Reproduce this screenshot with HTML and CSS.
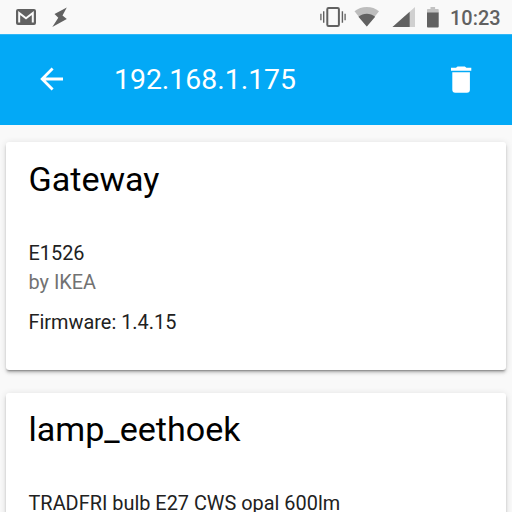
FILE: index.html
```html
<!DOCTYPE html>
<html lang="en">
<head>
<meta charset="utf-8">
<title>192.168.1.175</title>
<link rel="stylesheet" href="styles.css">
</head>
<body>
<div class="status">
  <svg class="mail" width="20" height="16" viewBox="0 0 20 16"><rect width="20" height="16" rx="2" fill="#616161"/><path d="M3.2 13.6V4L10 9.3 16.8 4v9.6" fill="none" stroke="#fafafa" stroke-width="2"/></svg>
  <svg class="bolt" width="16" height="21" viewBox="0 0 16 21"><path d="M14.8.5L2.5 7.1l3.8 3.6L.3 20 14.8 12 10.5 8.4Z" fill="#616161"/></svg>
  <svg class="vibrate" width="26" height="22" viewBox="0 0 26 22"><g fill="none" stroke="#616161"><rect x="7.3" y="2" width="11.6" height="18" rx="1.3" stroke-width="2"/><path d="M3.7 5.2v11.6M22.4 5.2v11.6" stroke-width="1.4"/><path d="M.9 7.7v6.6M25.1 7.7v6.6" stroke-width="1.3"/></g></svg>
  <svg class="wifi" width="26" height="20" viewBox="0 0 26 20"><path d="M.5 4.200C4 1.600 8 0 12.800 0s8.800 1.600 12.200 4.200L12.800 19.500Z" fill="#bdbdbd"/><path d="M4.400 9.700c5-4 11.800-4 16.800 0l-8.400 9.800Z" fill="#616161"/></svg>
  <svg class="signal" width="24" height="20" viewBox="0 0 24 20"><path d="M23 0v20H.5Z" fill="#d0d0d0"/><path d="M17.700 4.800V20H.5Z" fill="#616161"/></svg>
  <svg class="battery" width="12" height="21" viewBox="0 0 12 21"><path d="M3.500 0h4.600v2H11q.7 0 .7.8V6H0V2.800q0-.8.7-.8h2.800Z" fill="#c2c2c2"/><path d="M0 5.500h11.700v14q0 1-.8 1H.8q-.8 0-.8-1Z" fill="#616161"/></svg>
  <span class="clock">10:23</span>
</div>
<header class="toolbar">
  <svg class="back" width="24" height="24" viewBox="0 0 24 24"><path d="M23 10.600v2.800H5.600l8 8-2 2L.2 12 11.600.6l2 2-8 8Z" fill="#fff"/></svg>
  <h1 class="address">192.168.1.175</h1>
  <svg class="trash" width="21" height="27" viewBox="0 0 21 27"><path d="M6.500.5h7.400l1.500 1.300h4.900v3H0v-3h5ZM1.300 6.200h17.600v17.500q0 3-3 3H4.300q-3 0-3-3Z" fill="#fff"/></svg>
</header>
<main class="list">
  <section class="card">
    <h2 class="name">Gateway</h2>
    <p class="line">E1526</p>
    <p class="line maker">by IKEA</p>
    <p class="line firmware">Firmware: 1.4.15</p>
  </section>
  <section class="card">
    <h2 class="name">lamp_eethoek</h2>
    <p class="line">TRADFRI bulb E27 CWS opal 600lm</p>
  </section>
</main>
</body>
</html>
```
FILE: styles.css
```css
* { box-sizing: border-box; }
html, body { height: 100%; }
body {
  margin: 0;
  overflow: hidden;
  background: #f9f9f9;
  font-family: Roboto, "Liberation Sans", sans-serif;
}
svg { display: block; flex: none; }
h1, h2, p { margin: 0; font-weight: 400; white-space: nowrap; }
.status {
  display: flex;
  align-items: center;
  height: 34px;
  padding: 0 11.5px 0 16px;
  color: #616161;
}
.bolt { margin-left: 16px; }
.vibrate { margin-left: auto; }
.wifi { margin-left: 8.5px; }
.signal { margin-left: 11.5px; }
.battery { margin-left: 11px; }
.clock { margin: 3px 0 0 11.5px; font-size: 19.9px; font-weight: 500; line-height: 24px; }
.toolbar {
  display: flex;
  align-items: center;
  height: 91px;
  padding: 0 40px;
  background: #03a9f6;
  box-shadow: inset 0 1px #30b7f7;
  color: #fff;
}
.back { margin-bottom: 1px; }
.address { margin-left: 50px; font-size: 28.4px; line-height: 34px; }
.trash { margin-left: auto; }
.list {
  display: flex;
  flex-direction: column;
  gap: 23px;
  padding: 17px 6px 0;
}
.card {
  height: 228px;
  padding: 13px 22.5px;
  border-radius: 3px;
  background: #fff;
  box-shadow: 0 3px 3px rgba(0,0,0,.14), 0 1px 7px rgba(0,0,0,.12), 0 2px 2px -1px rgba(0,0,0,.35);
  color: #212121;
}
.card + .card { padding-top: 12px; }
.name { margin-bottom: 36px; color: #000; font-size: 34.1px; line-height: 48px; }
.line { font-size: 19.9px; line-height: 29px; }
.maker { color: #727272; }
.firmware { margin-top: 10.5px; }
```
